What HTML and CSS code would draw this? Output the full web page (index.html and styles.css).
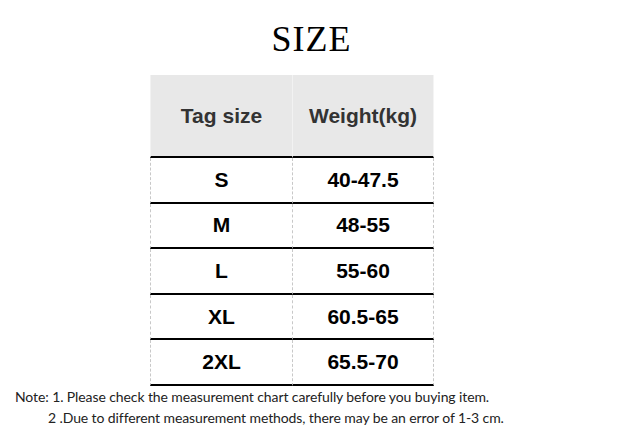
FILE: index.html
```html
<!DOCTYPE html>
<html>
<head>
<meta charset="utf-8">
<link rel="stylesheet" href="styles.css">
</head>
<body>
<div class="page">
  <h1 class="title">SIZE</h1>
  <div class="table">
    <div class="cell head">Tag size</div>
    <div class="cell head last">Weight(kg)</div>
    <div class="cell">S</div><div class="cell last">40-47.5</div>
    <div class="cell">M</div><div class="cell last">48-55</div>
    <div class="cell">L</div><div class="cell last">55-60</div>
    <div class="cell">XL</div><div class="cell last">60.5-65</div>
    <div class="cell">2XL</div><div class="cell last">65.5-70</div>
  </div>
  <div class="notes">
    <p class="note">Note: 1. Please check the measurement chart carefully before you buying item.</p>
    <p class="note indent">2 .Due to different measurement methods, there may be an error of 1-3 cm.</p>
  </div>
</div>
</body>
</html>
```

FILE: styles.css
```css
html, body {
  margin: 0;
  padding: 0;
  background: #fff;
}
.page {
  width: 623px;
  height: 447px;
  display: flex;
  flex-direction: column;
  align-items: stretch;
}
.title {
  margin: 0;
  height: 75px;
  box-sizing: border-box;
  padding-top: 19px;
  text-align: center;
  font-family: "Liberation Serif", "DejaVu Serif", serif;
  font-weight: normal;
  font-size: 36px;
  line-height: 40px;
  letter-spacing: 1px;
  color: #000;
}
.table {
  align-self: flex-start;
  margin-left: 150px;
  display: grid;
  grid-template-columns: 142px 142px;
  grid-template-rows: 83px repeat(5, 45.6px);
}
.cell {
  display: flex;
  align-items: center;
  justify-content: center;
  font-family: "Liberation Sans", Arial, sans-serif;
  font-weight: bold;
  font-size: 21px;
  color: #000;
  border-bottom: 2px solid #000;
  border-left: 1px dashed #c8c8c8;
}
.cell.last {
  border-right: 1px dashed #c8c8c8;
}
.cell.head {
  background: #e8e8e8;
  color: #333;
  border-left: 1px solid #f2f2f2;
}
.cell.head.last {
  border-right: 1px solid #f4f4f4;
}
.notes {
  padding-left: 15px;
}
.note {
  margin: 0;
  font-family: Lato, "Open Sans", sans-serif;
  font-size: 14px;
  letter-spacing: -0.1px;
  line-height: 21px;
  color: #222;
  white-space: nowrap;
}
.note.indent {
  padding-left: 33px;
}
```
